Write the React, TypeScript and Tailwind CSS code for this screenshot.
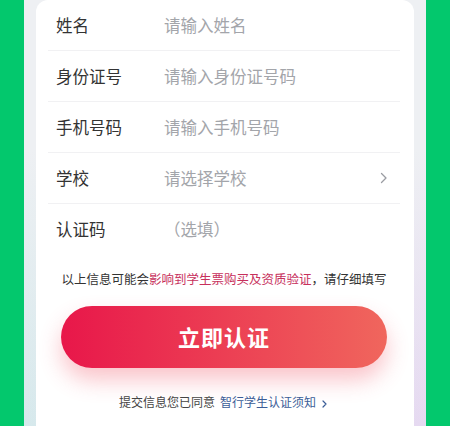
import React from "react";

const font = { fontFamily: '"Noto Sans CJK SC", "Noto Sans", sans-serif' };

function Row({ label, placeholder, chevron, last }: { label: string; placeholder: string; chevron?: boolean; last?: boolean }) {
  return (
    <div className={`flex h-[51px] items-center pl-[8px] pr-[10px] ${last ? "" : "border-b border-[#f1f1f3]"}`}>
      <div className="w-[108px] shrink-0 text-[16.5px] text-[#333333]">{label}</div>
      <div className="flex-1 text-[16.5px] text-[#a3a5aa]">{placeholder}</div>
      {chevron && (
        <svg width="8" height="12" viewBox="0 0 8 12" className="mr-[2px]">
          <path d="M1.5 1.5 L6 6 L1.5 10.5" fill="none" stroke="#9a9ca2" strokeWidth="1.3" strokeLinecap="round" strokeLinejoin="round" />
        </svg>
      )}
    </div>
  );
}

export default function App() {
  return (
    <div className="flex h-[426px] w-[450px] overflow-hidden bg-[#03c86d] px-[24px]" style={font}>
      <div className="flex flex-1 bg-[linear-gradient(180deg,#eef0f3_35%,rgba(238,240,243,0)_100%),linear-gradient(90deg,#d6e9ec,#e6d9f1)] px-[12px]">
        <div className="flex flex-1 flex-col rounded-t-[12px] bg-white pl-[12px] pr-[14px]">
          <Row label="姓名" placeholder="请输入姓名" />
          <Row label="身份证号" placeholder="请输入身份证号码" />
          <Row label="手机号码" placeholder="请输入手机号码" />
          <Row label="学校" placeholder="请选择学校" chevron />
          <Row label="认证码" placeholder="（选填）" last />
          <div className="mt-[16px] text-center text-[12.5px] leading-[16px] text-[#333333]">
            以上信息可能会<span className="text-[#c7305c]">影响到学生票购买及资质验证</span>，请仔细填写
          </div>
          <div className="mx-auto mt-[19px] flex h-[62px] w-[326px] items-center justify-center rounded-full bg-[linear-gradient(90deg,#e8174a,#f0665d)] shadow-[0_12px_22px_rgba(240,70,90,0.32)]">
            <span className="mb-[3px] text-[22px] font-bold leading-none tracking-[1px] text-white">立即认证</span>
          </div>
          <div className="mt-[26px] flex items-center justify-center text-[12px] leading-[16px]">
            <span className="text-[#444444]">提交信息您已同意</span>
            <span className="ml-[5px] text-[#3b5d97]">智行学生认证须知</span>
            <svg width="8" height="10" viewBox="0 0 8 10" className="ml-[5px] mt-[3px]">
              <path d="M2 2 L5 5 L2 8" fill="none" stroke="#3b5d97" strokeWidth="1.2" strokeLinecap="round" strokeLinejoin="round" />
            </svg>
          </div>
        </div>
      </div>
    </div>
  );
}
